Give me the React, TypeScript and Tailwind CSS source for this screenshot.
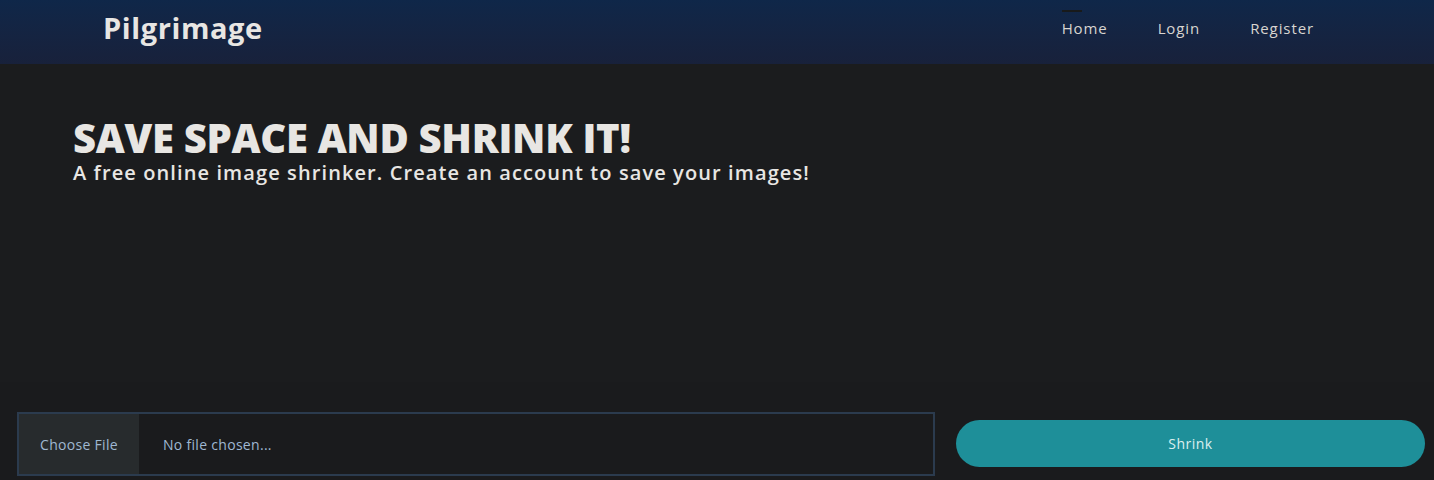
import React from "react";

export default function App() {
  const font = { fontFamily: '"Open Sans", "Noto Sans", sans-serif' };
  return (
    <div className="min-h-[480px] w-[1434px] bg-[#1b1c1e] text-[#e8e6e3]" style={font}>
      <header className="h-16 bg-gradient-to-b from-[#0f2749] to-[#18213b] flex items-start justify-between pl-[103px] pr-[120px]">
        <div className="mt-[8px] text-[29px] leading-[40px] font-bold tracking-[0.6px] text-[#e8e6e3]">Pilgrimage</div>
        <nav className="mt-[18px] flex items-center gap-[50px] text-[15px] leading-[20px] text-[#d8d5d0] tracking-[0.9px]">
          <div className="relative">
            <span className="absolute -top-[8px] left-0 h-[2px] w-5 bg-[#181a1b]" />
            Home
          </div>
          <div>Login</div>
          <div>Register</div>
        </nav>
      </header>
      <section className="pl-[73px] pt-[51px] h-[318px]">
        <h1 className="text-[40px] font-extrabold leading-[46px] tracking-[-0.3px]">SAVE SPACE AND SHRINK IT!</h1>
        <p className="text-[20px] font-semibold leading-[24px] tracking-[1.1px]">A free online image shrinker. Create an account to save your images!</p>
      </section>
      <div className="bg-[#1a1b1d] h-[98px] pl-[17px] pr-[9px] pt-[30px] flex gap-[21px]">
        <div className="w-[918px] shrink-0 h-16 border-2 border-[#2b3b4e] flex items-stretch text-[14px] text-[#9fb8d2]">
          <div className="w-[120px] bg-[#272b2d] flex items-center justify-center tracking-[0.3px]">Choose File</div>
          <div className="flex items-center pl-6 tracking-[0.3px]">No file chosen...</div>
        </div>
        <div className="mt-2 h-[47px] flex-1 rounded-full bg-[#1e8f99] flex items-center justify-center text-[14px] font-medium tracking-[0.5px] text-[#dcefef]">Shrink</div>
      </div>
    </div>
  );
}
